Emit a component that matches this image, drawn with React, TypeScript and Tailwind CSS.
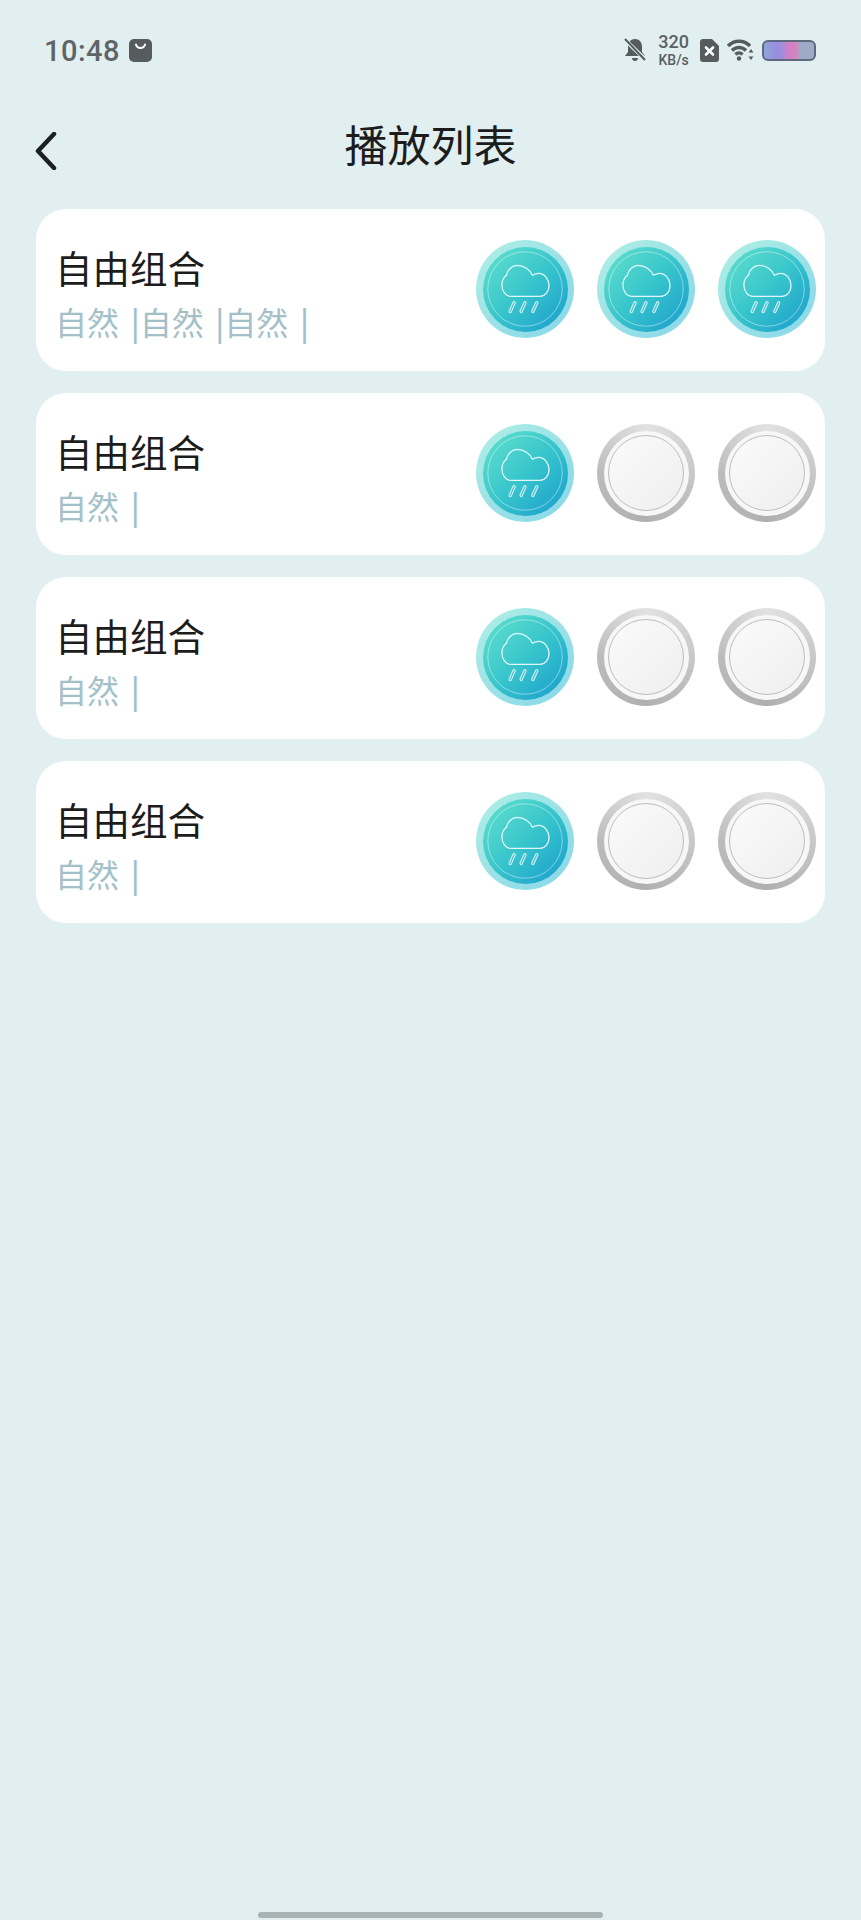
import React from "react";

const CJK = { fontFamily: '"Noto Sans CJK SC", "Noto Sans", sans-serif' };

const RainIcon = () => (
  <svg viewBox="0 0 100 100" className="absolute inset-0 h-full w-full" fill="none">
    <circle cx="50" cy="50" r="38" stroke="#ffffff" strokeOpacity="0.55" strokeWidth="0.8" />
    <path
      d="M36 57.600 C30 57.600 26.400 52 26.400 46 C26.400 41 28.500 38 31 36 C32 30 37 26 42 26 C49 26 55 30 57.500 36 C60 34.500 62 34 64 34 C70 34 74.500 40 74.500 46.500 C74.500 53 70 57.600 65 57.600 Z"
      stroke="#ffffff"
      strokeOpacity="0.85"
      strokeWidth="1.300"
    />
    <g strokeLinecap="round">
      <g stroke="#ffffff" strokeOpacity="0.8" strokeWidth="3.400">
        <path d="M38.900 64 L34.900 73" />
        <path d="M50 64 L46 73" />
        <path d="M62 64 L58 73" />
      </g>
      <g stroke="#2fb4c8" strokeOpacity="0.8" strokeWidth="1.300">
        <path d="M38.900 64 L34.900 73" />
        <path d="M50 64 L46 73" />
        <path d="M62 64 L58 73" />
      </g>
    </g>
  </svg>
);

const ActiveSound = () => (
  <div className="relative flex h-[98px] w-[98px] shrink-0 items-center justify-center rounded-full bg-gradient-to-br from-[#b0efe4] to-[#86d6e9]">
    <div className="h-[85px] w-[85px] rounded-full bg-gradient-to-br from-[#62e2cc] via-[#37c5cc] to-[#1a9bcb] blur-[0.5px]" />
    <RainIcon />
  </div>
);

const EmptySound = () => (
  <div className="flex h-[98px] w-[98px] shrink-0 items-center justify-center rounded-full bg-[conic-gradient(#e2e2e2,#c8c8c8_25%,#b0b0b0_50%,#bcbcbc_75%,#e2e2e2)]">
    <div className="flex h-[85px] w-[85px] items-center justify-center rounded-full bg-[#f7f7f7]">
      <div className="h-[76px] w-[76px] rounded-full border border-[#bdbdbd] bg-gradient-to-br from-[#fbfbfb] to-[#eeeeee]" />
    </div>
  </div>
);

const PlayCard = ({ count }: { count: number }) => (
  <div className="flex h-[162px] items-center justify-between rounded-[30px] bg-white pl-[19px] pr-[9px]">
    <div className="pt-[6px]" style={CJK}>
      <div className="text-[37.500px] leading-[48px] text-[#1c1c1c]">自由组合</div>
      <div className="mt-[8px] whitespace-pre text-[32px] leading-[44px] text-[#a3c0c9] [word-spacing:4.500px]">
        {Array.from({ length: count }).map((_, i) => (
          <span key={i}>
            自然 <span className="font-medium">|</span>
          </span>
        ))}
      </div>
    </div>
    <div className="mb-[2px] flex gap-[23px]">
      <ActiveSound />
      {count > 1 ? <ActiveSound /> : <EmptySound />}
      {count > 2 ? <ActiveSound /> : <EmptySound />}
    </div>
  </div>
);

const StatusBar = () => (
  <div className="flex h-[100px] items-center justify-between pl-[44px] pr-[45px]">
    <div className="flex items-center gap-[9px]">
      <span
        className="pt-[2px] text-[29px] font-medium leading-none tracking-[0.5px] text-[#5f6567]"
        style={{ fontFamily: "Roboto, sans-serif" }}
      >
        10:48
      </span>
      <svg width="23" height="23" viewBox="0 0 23 23">
        <rect width="23" height="23" rx="5" fill="#565b5d" />
        <path d="M7 5.500 C8 10 15 10 16 5.500" stroke="#fff" strokeWidth="2" fill="none" strokeLinecap="round" />
      </svg>
    </div>
    <div className="flex items-center">
      <svg width="22" height="24" viewBox="0 0 22 24" className="mr-[12px]">
        <path d="M11 1 C6 1 4 5 4 9 V14 L1 18 H21 L18 14 V9 C18 5 16 1 11 1 Z M8 20 H14 C14 24 8 24 8 20 Z" fill="#565b5d" />
        <path d="M1 2 L21 21" stroke="#e1eff0" strokeWidth="4" />
        <path d="M1 1 L21 22" stroke="#565b5d" strokeWidth="2" />
      </svg>
      <div className="mr-[11px] flex flex-col items-center text-[#5a6062]" style={{ fontFamily: "Roboto, sans-serif" }}>
        <span className="text-[18px] font-medium leading-[15px]">320</span>
        <span className="mt-[5px] text-[14px] font-medium leading-[12px]">KB/s</span>
      </div>
      <svg width="19" height="23" viewBox="0 0 19 23" className="mr-[8px]">
        <path d="M3 0 H12 L19 7 V20 A3 3 0 0 1 16 23 H3 A3 3 0 0 1 0 20 V3 A3 3 0 0 1 3 0 Z" fill="#565b5d" />
        <path d="M6 8.500 L13 15.500 M13 8.500 L6 15.500" stroke="#fff" strokeWidth="2.600" strokeLinecap="round" />
      </svg>
      <svg width="27" height="22" viewBox="0 0 27 22" className="mr-[8px]" fill="none" stroke="#565b5d" strokeWidth="3.500">
        <path d="M1 7 C7 0.500 17 0.500 23 7" />
        <path d="M5 11.500 C9 7.500 15 7.500 19 11.500" />
        <path d="M8.500 15.500 C10.500 13.500 13.500 13.500 15.500 15.500" />
        <circle cx="12" cy="19.500" r="2.200" fill="#565b5d" stroke="none" />
        <path d="M24 10 L21.500 13.500 H26.500 Z M24 21 L21.500 17.500 H26.500 Z" fill="#565b5d" stroke="none" />
      </svg>
      <div className="h-[21px] w-[54px] rounded-[6px] border-2 border-[#5d6a7d] bg-[linear-gradient(90deg,#8da7d8_0%,#9a8be0_28%,#a48fd8_38%,#d07fc8_48%,#d585bd_65%,#9daac8_72%,#9daac8_100%)]" />
    </div>
  </div>
);

export default function App() {
  return (
    <div className="relative flex min-h-[1920px] w-[861px] flex-col bg-[#e1eff0]">
      <StatusBar />
      <header className="relative flex h-[92px] items-center justify-center">
        <svg width="24" height="38" viewBox="0 0 24 38" className="absolute left-[34px] top-[32px]" fill="none">
          <path d="M20 2 L4 19 L20 36" stroke="#1d2022" strokeWidth="4.500" strokeLinecap="round" strokeLinejoin="round" />
        </svg>
        <h1 className="mb-[5px] text-[43px] leading-none text-[#1c1c1c]" style={CJK}>
          播放列表
        </h1>
      </header>
      <main className="mt-[17px] flex flex-col gap-[22px] px-[36px]">
        <PlayCard count={3} />
        <PlayCard count={1} />
        <PlayCard count={1} />
        <PlayCard count={1} />
      </main>
      <div className="absolute bottom-[2px] left-[258px] h-[6px] w-[345px] rounded-full bg-[#a9b3b4]" />
    </div>
  );
}
